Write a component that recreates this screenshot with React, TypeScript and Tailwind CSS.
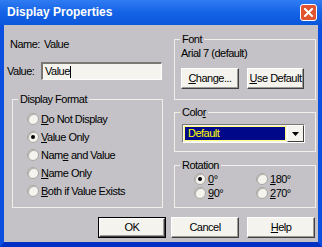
import type { ReactNode } from 'react';

const Radio = ({ checked, children, row = 'h-[18px]' }: { checked?: boolean; children: ReactNode; row?: string }) => (
  <div className={`flex items-center ${row}`}>
    <span className="w-3 h-3 rounded-full bg-[#f4f3ee] border border-[#a8a6a0] shadow-[inset_1px_1px_0_#b4b2ac] flex items-center justify-center">
      {checked && <span className="w-1 h-1 rounded-full bg-black" />}
    </span>
    <span className="ml-[2px]">{children}</span>
  </div>
);

const Button = ({ children, w, primary }: { children: ReactNode; w: string; primary?: boolean }) => (
  <div className={`${w} h-[21px] ${primary ? 'border border-black' : ''}`}>
    <div className="w-full h-full flex items-center justify-center bg-[#f4f3ee] border-t border-l border-t-white border-l-white border-r border-b border-r-[#404040] border-b-[#404040] shadow-[inset_-1px_-1px_0_#9c9a94]">
      {children}
    </div>
  </div>
);

const Group = ({ title, className, children }: { title: ReactNode; className: string; children: ReactNode }) => (
  <fieldset className={`border border-[#f0efea] ${className}`}>
    <legend className="ml-[5px] px-[2px] leading-[13px]">{title}</legend>
    {children}
  </fieldset>
);

export default function App() {
  return (
    <div className="w-[322px] h-[247px] flex flex-col overflow-hidden select-none text-black text-[11px] leading-[13px] tracking-[-0.5px] font-['Liberation_Sans',Arial,sans-serif]">
      {/* Title bar */}
      <div className="h-[25px] flex items-center justify-between pl-[7px] pr-[5px] bg-linear-to-b from-[#2f7cf2] via-[#1462e6] to-[#0b57dc]">
        <span className="text-white font-bold text-[12px] tracking-normal">Display Properties</span>
        <div className="w-[17px] h-[17px] rounded-[3px] border border-white bg-[#e0542f] flex items-center justify-center">
          <svg width="9" height="9" viewBox="0 0 9 9">
            <path d="M1 1L8 8M8 1L1 8" stroke="white" strokeWidth="2" strokeLinecap="square" />
          </svg>
        </div>
      </div>

      {/* Body */}
      <div className="flex-1 flex flex-col bg-[#c4c2c6] border-l-4 border-r-4 border-b-[5px] border-[#0b4fe0] border-b-[#0030c4]">
        <div className="flex">
          {/* Left column */}
          <div className="w-[159px] flex flex-col">
            <div className="mt-[13px] pl-[6px] flex">
              <span className="w-[34px]">Name:</span>
              <span>Value</span>
            </div>
            <div className="mt-[11px] pl-[3px] flex items-center">
              <span className="w-[34px]">Value:</span>
              <div className="w-[121px] h-[18px] flex items-center pl-[2px] bg-[#f5f4ef] border-t-2 border-l-2 border-t-[#7a7873] border-l-[#7a7873] border-b border-r border-b-white border-r-white">
                <span>Value</span>
                <span className="w-px h-[12px] bg-black" />
              </div>
            </div>
            <Group title="Display Format" className="mt-[13px] ml-[8px] w-[151px] h-[115px]">
              <div className="pt-[4px] pl-[14px]">
                <Radio><u>D</u>o Not Display</Radio>
                <Radio checked><u>V</u>alue Only</Radio>
                <Radio>Nam<u>e</u> and Value</Radio>
                <Radio><u>N</u>ame Only</Radio>
                <Radio><u>B</u>oth if Value Exists</Radio>
              </div>
            </Group>
          </div>

          {/* Right column */}
          <div className="ml-[11px] w-[142px] flex flex-col">
            <Group title="Font" className="mt-[8px] h-[67px]">
              <div className="pt-[1px] pl-[6px]">Arial 7 (default)</div>
              <div className="mt-[8px] pl-[6px] flex gap-[8px]">
                <Button w="w-[58px]"><u>C</u>hange...</Button>
                <Button w="w-[57px]"><u>U</u>se Default</Button>
              </div>
            </Group>
            <Group title={<>Colo<u>r</u></>} className="mt-[6px] h-[46px]">
              <div className="mt-[5px] ml-[7px] w-[123px] h-[19px] flex bg-[#f5f4ef] border-t border-l border-t-[#7a7873] border-l-[#7a7873] border-b border-r border-b-white border-r-white">
                <div className="flex-1 m-[1px] flex items-center pl-[3px] bg-[#00088a] border border-[#ffff80] text-[#ffff00]">Default</div>
                <div className="w-[17px] flex items-center justify-center bg-[#f4f3ee] border-t border-l border-white border-r border-b border-r-[#404040] border-b-[#404040]">
                  <svg width="7" height="4" viewBox="0 0 7 4">
                    <path d="M0 0H7L3.5 4Z" fill="black" />
                  </svg>
                </div>
              </div>
            </Group>
            <Group title="Rotation" className="mt-[7px] h-[49px]">
              <div className="ml-[19px] grid grid-cols-[62px_1fr]">
                <Radio checked row="h-[14px]"><u>0</u>°</Radio>
                <Radio row="h-[14px]"><u>1</u>80°</Radio>
                <Radio row="h-[14px]"><u>9</u>0°</Radio>
                <Radio row="h-[14px]"><u>2</u>70°</Radio>
              </div>
            </Group>
          </div>
        </div>

        {/* Buttons */}
        <div className="mt-[9px] pr-[3px] flex justify-end">
          <Button w="w-[68px]" primary>OK</Button>
          <div className="ml-[5px]"><Button w="w-[68px]">Cancel</Button></div>
          <div className="ml-[8px]"><Button w="w-[68px]"><u>H</u>elp</Button></div>
        </div>
      </div>
    </div>
  );
}
